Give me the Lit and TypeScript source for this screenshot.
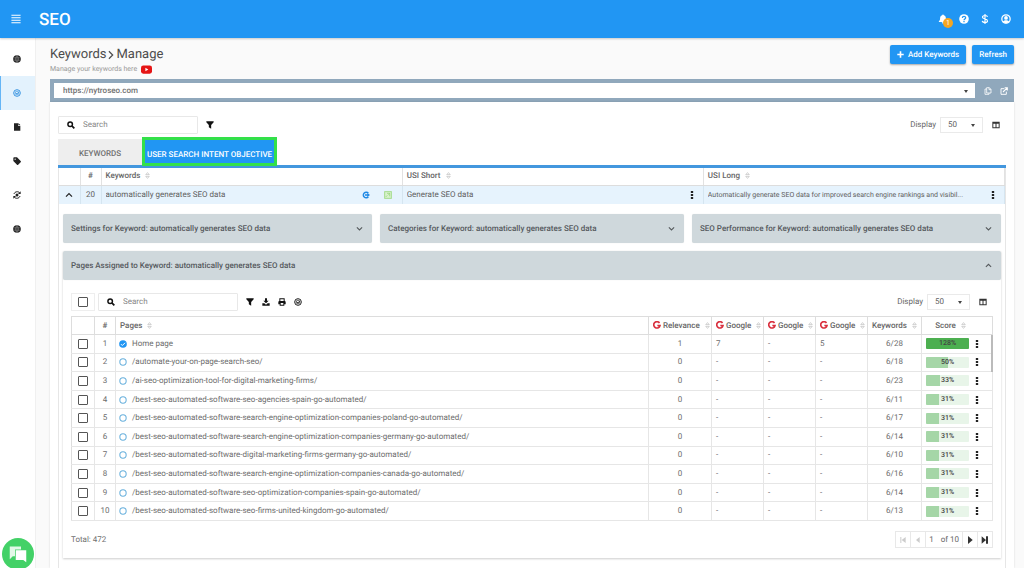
import { LitElement, html, css, svg, TemplateResult } from "lit";
import { customElement, property } from "lit/decorators.js";

const ICONS: Record<string, TemplateResult> = {
  menu: svg`<path d="M1 3h22M1 9h22M1 15h22M1 21h22" stroke="currentColor" stroke-width="2.800" fill="none"/>`,
  globe: svg`<circle cx="12" cy="12" r="11.500" fill="currentColor"/><path d="M2 8.500h20M2 15.500h20M12 1v22M12 2c-6 6-6 14 0 20M12 2c6 6 6 14 0 20" stroke="#fff" stroke-opacity=".55" stroke-width="1.300" fill="none"/>`,
  target: svg`<circle cx="12" cy="12" r="10" fill="none" stroke="currentColor" stroke-width="2.800"/><circle cx="12" cy="12" r="5.500" fill="none" stroke="currentColor" stroke-width="2"/><path d="M8.500 11.500l3.500 3.500 5-6" fill="none" stroke="currentColor" stroke-width="2.400"/>`,
  file: svg`<path d="M3 1h12v7h7v15H3zM16 0l6 6h-6z" fill="currentColor"/>`,
  tag: svg`<path fill-rule="evenodd" d="M1 3.500A2.500 2.500 0 0 1 3.500 1H12l11 11a2.500 2.500 0 0 1 0 3.500L15.500 23a2.500 2.500 0 0 1-3.500 0L1 12zM6.500 4.500a2 2 0 1 0 0 4 2 2 0 0 0 0-4z" fill="currentColor"/>`,
  sync: svg`<path d="M3 9C5 1 17 0 20 6M21 15c-2 8-14 9-17 3" stroke="currentColor" stroke-width="3" fill="none"/><path d="M23 1v8h-8zM1 23v-8h8z" fill="currentColor"/><circle cx="12" cy="12" r="4.500" fill="currentColor"/>`,
  bell: svg`<path d="M12 1a2 2 0 0 1 2 2c4 1 5 4 5 8 0 4 1 5 3 7v1H2v-1c2-2 3-3 3-7 0-4 1-7 5-8a2 2 0 0 1 2-2zM9 20h6a3 3 0 0 1-6 0z" fill="currentColor"/>`,
  help: svg`<circle cx="12" cy="12" r="11.500" fill="currentColor"/><path d="M8 9.500c0-5 8-5 8-.5 0 3-4 3-4 6M12 17v2.800" stroke="#2196f3" stroke-width="3" fill="none"/>`,
  dollar: svg`<path d="M18 7c-1-5-12-4-12 .5C6 13 18 10 18 16.500c0 5-12 5-12.500 0M12 0v24" stroke="currentColor" stroke-width="2.800" fill="none"/>`,
  user: svg`<circle cx="12" cy="12" r="10" fill="none" stroke="currentColor" stroke-width="3"/><circle cx="12" cy="9.500" r="4.500" fill="currentColor"/><path d="M4 19c2-5 14-5 16 0l-8 4z" fill="currentColor"/>`,
  play: svg`<rect x="0" y="3" width="24" height="18" rx="5" fill="#e51515"/><path d="M9.500 8l6.500 4-6.500 4z" fill="#fff"/>`,
  chevRight: svg`<path d="M7 3l9 9-9 9" stroke="currentColor" stroke-width="3" fill="none"/>`,
  chevDown: svg`<path d="M3 8l9 9 9-9" stroke="currentColor" stroke-width="3.600" fill="none"/>`,
  chevUp: svg`<path d="M3 17l9-9 9 9" stroke="currentColor" stroke-width="3.600" fill="none"/>`,
  plus: svg`<path d="M12 1v22M1 12h22" stroke="currentColor" stroke-width="5.500" fill="none"/>`,
  copy: svg`<path d="M8 2h8l5 5v11H8zM15 2v6h6M8 6H3v16h12v-4" stroke="currentColor" stroke-width="2.400" fill="none"/>`,
  external: svg`<path d="M13 5H3v17h16v-8" stroke="currentColor" stroke-width="2.800" fill="none"/><path d="M9 15L20 4M14 2.500h8v8" stroke="currentColor" stroke-width="3.200" fill="none"/>`,
  search: svg`<circle cx="9.500" cy="9.500" r="6.800" stroke="currentColor" stroke-width="4.400" fill="none"/><path d="M14.500 14.500l7.500 7.500" stroke="currentColor" stroke-width="5" fill="none"/>`,
  filter: svg`<path d="M1 1h22v3l-7.500 8v11l-7-4v-7L1 4z" fill="currentColor"/>`,
  columns: svg`<path fill-rule="evenodd" d="M1 2h22v20H1zM4 8v11h6.500V8zM13.500 8v11H20V8z" fill="currentColor"/>`,
  download: svg`<path d="M9 1h6v7h5l-8 8-8-8h5zM1 16h6l5 4 5-4h6v7H1z" fill="currentColor"/>`,
  print: svg`<path fill-rule="evenodd" d="M4 1h16v8h1l2 2v8h-4v4H5v-4H1v-8l2-2h1zM7 4v5h10V4zM8 15v5h8v-5z" fill="currentColor"/>`,
  sort: svg`<path d="M6 9l6-7 6 7zM6 15l6 7 6-7z" stroke="currentColor" stroke-width="1.800" fill="none"/>`,
  dots: svg`<path d="M8.500 0h7v6h-7zM8.500 9h7v6h-7zM8.500 18h7v6h-7z" fill="currentColor"/>`,
  google: svg`<path d="M19.500 6A9.500 9.500 0 1 0 21 13.500h-8" stroke="#d9303e" stroke-width="5" fill="none"/>`,
  visit: svg`<path d="M19 6.500a8.500 8.500 0 1 0 0 11" stroke="#1e88e5" stroke-width="4.500" fill="none"/><path d="M9 10h7V6l8 6-8 6v-4H9z" fill="#1e88e5"/>`,
  green: svg`<rect x="2" y="2" width="20" height="20" stroke="#a5dc8c" stroke-width="3" fill="#d9f2cd"/><path d="M5 18l5-5M9 7h8v9M13 11l4-4" stroke="#8ed070" stroke-width="2" fill="none"/>`,
  checked: svg`<circle cx="12" cy="12" r="11.500" fill="#2196f3"/><path d="M6 12.500l4 4 8-8" stroke="#fff" stroke-width="3" fill="none"/>`,
  ring: svg`<circle cx="12" cy="12" r="9.500" fill="#fff" stroke="#6ab1dd" stroke-width="3.200"/>`,
  first: svg`<path d="M4 3h3v18H4zM20 3v18L8 12z" fill="currentColor"/>`,
  prev: svg`<path d="M17 3v18L6 12z" fill="currentColor"/>`,
  next: svg`<path d="M6 0v24l14-12z" fill="currentColor"/>`,
  last: svg`<path d="M2 1v22l13-11zM15 1h6v22h-6z" fill="currentColor"/>`,
  chat: svg`<path d="M1 2h15v4H8v9H5l-4 4z" fill="#fff" fill-opacity=".85"/><path d="M9 7h14v16l-4-3H9z" fill="#fff"/>`,
};

@customElement("seo-icon")
export class SeoIcon extends LitElement {
  static styles = css`
    :host { display: inline-flex; flex: none; width: 8px; height: 8px; }
    svg { display: block; width: 100%; height: 100%; }
  `;
  @property() name = "menu";
  render() {
    return html`<svg viewBox="0 0 24 24" aria-hidden="true">${ICONS[this.name]}</svg>`;
  }
}

interface Page { path: string; relevance: number; ranks: string[]; keywords: string; score: number; }
const page = (path: string, keywords: string, score: number): Page =>
  ({ path, relevance: 0, ranks: ["-", "-", "-"], keywords, score });

const PAGES: Page[] = [
  { path: "Home page", relevance: 1, ranks: ["7", "-", "5"], keywords: "6/28", score: 128 },
  page("/automate-your-on-page-search-seo/", "6/18", 50),
  page("/ai-seo-optimization-tool-for-digital-marketing-firms/", "6/23", 33),
  page("/best-seo-automated-software-seo-agencies-spain-go-automated/", "6/11", 31),
  page("/best-seo-automated-software-search-engine-optimization-companies-poland-go-automated/", "6/17", 31),
  page("/best-seo-automated-software-search-engine-optimization-companies-germany-go-automated/", "6/14", 31),
  page("/best-seo-automated-software-digital-marketing-firms-germany-go-automated/", "6/10", 31),
  page("/best-seo-automated-software-search-engine-optimization-companies-canada-go-automated/", "6/16", 31),
  page("/best-seo-automated-software-seo-optimization-companies-spain-go-automated/", "6/14", 31),
  page("/best-seo-automated-software-seo-firms-united-kingdom-go-automated/", "6/13", 31),
];

const NAV = [
  ["globe", "Websites"], ["target", "Keywords"], ["file", "Pages"],
  ["tag", "Tags"], ["sync", "Automation"], ["globe", "Domains"],
];

@customElement("app-root")
export class AppRoot extends LitElement {
  static styles = css`
    :host {
      display: flex; flex-direction: column; height: 100vh; overflow: hidden;
      background: #fafafa; color: #606060; font: 8px/12px Roboto, "Liberation Sans", sans-serif;
      text-rendering: geometricPrecision;
    }
    * { box-sizing: border-box; }
    button, input, select { font: inherit; color: inherit; margin: 0; text-rendering: inherit; }
    button { border: 0; background: none; padding: 0; cursor: pointer; display: inline-flex; align-items: center; }
    a { color: inherit; text-decoration: none; }
    h1 { margin: 0; font: inherit; }

    .topbar { flex: none; height: 38px; display: flex; align-items: center; background: #2196f3; color: #fff; padding: 0 13px 0 11px; box-shadow: 0 1px 2px #0003; z-index: 1; }
    .brand { font-size: 17px; line-height: 20px; font-weight: 500; margin-left: 18px; padding-top: 2px; }
    .tools { margin-left: auto; display: flex; gap: 11px; align-items: center; }
    .tools seo-icon, .burger seo-icon { width: 10px; height: 10px; }
    .bell { position: relative; }
    .badge { position: absolute; left: 5px; top: 4px; width: 10px; height: 10px; border-radius: 50%; background: #f5a623; font-size: 7px; line-height: 10px; text-align: center; }

    .shell { flex: 1; min-height: 0; display: flex; }
    .side { flex: none; width: 36px; background: #fff; border-right: 1px solid #f0f0f0; padding-top: 4px; }
    .nav { height: 34px; display: flex; align-items: center; justify-content: center; color: #222; padding-right: 2px; }
    .nav.on { background: #e3f2fd; color: #2f8fe0; box-shadow: inset 1px 0 #64b5f6; }

    .main { flex: 1; min-width: 0; padding: 7px 10px 0 14px; display: flex; flex-direction: column; }
    .head { display: flex; justify-content: space-between; align-items: flex-start; height: 34px; }
    .title { display: flex; align-items: center; font-size: 13px; line-height: 20px; color: #4c4c4c; }
    .title seo-icon { width: 10px; height: 10px; }
    .sub { display: flex; align-items: center; gap: 4px; height: 8px; font-size: 7px; line-height: 8px; color: #999; }
    .sub seo-icon { width: 11px; height: 11px; }
    .actions { display: flex; gap: 6px; }
    .btn { height: 19px; padding: 0 7px; gap: 4px; background: #2196f3; color: #fff; font-weight: 500; border-radius: 2px; box-shadow: 0 1px 2px #0005; }
    .btn seo-icon { width: 7px; height: 7px; }

    .urlbar { flex: none; height: 23px; padding: 4px 6px 4px 4px; background: #90a8bc; display: flex; align-items: center; gap: 8px; color: #fff; }
    .pick { position: relative; display: flex; align-items: center; }
    .pick select { appearance: none; width: 100%; height: 100%; border: 0; background: #fff; color: #606060; outline: 0; border-radius: 0; }
    .pick::after { content: ""; position: absolute; right: 7px; top: 50%; margin-top: -1px; border: 2px solid transparent; border-top: 3px solid #444; border-bottom: 0; pointer-events: none; }
    .url { flex: 1; height: 15px; margin-right: 1px; }
    .url select { padding: 0 9px; font-weight: 500; color: #707070; }

    .card { flex: 1; background: #fff; padding: 14px 8px 0; box-shadow: 0 0 2px #0002; }
    .bar { display: flex; align-items: center; height: 18px; gap: 8px; color: #111; }
    .find { display: flex; align-items: center; width: 140px; height: 18px; border: 1px solid #e8e8e8; padding: 0 8px; gap: 8px; border-radius: 1px; }
    .find input { min-width: 0; flex: 1; border: 0; outline: 0; padding: 0; background: none; color: #555; }
    .find input::placeholder { color: #888; }
    .display { margin-left: auto; display: flex; align-items: center; gap: 4px; color: #666; }
    .display .pick { width: 43px; height: 16px; border: 1px solid #eaeaea; }
    .display select { padding: 0 7px; }
    .cols { width: 20px; justify-content: center; color: #333; margin-left: -5px; }

    .tabs { display: flex; align-items: flex-end; margin-top: 3px; height: 31px; border-bottom: 3px solid #4397de; }
    .tab { height: 26px; width: 84px; padding-top: 4px; justify-content: center; background: #eee; color: #707070; font-weight: 500; }
    .tab.on { width: auto; height: 29px; padding: 6px 2px 0; margin-bottom: -1px; border: 3px solid #33e04a; background: #2196f3; color: #fff; }

    table { width: 100%; border-collapse: collapse; table-layout: fixed; }
    th, td { padding: 0 4px; text-align: left; font-weight: 400; white-space: nowrap; overflow: hidden; }
    th { font-weight: 500; color: #666; }
    th seo-icon { color: #aaa; margin-left: 2px; width: 7px; height: 7px; vertical-align: -1px; }
    .c { text-align: center; }
    .outer { border: 1px solid #e6e6e6; border-top: 0; height: 100%; }
    .keys th { height: 17px; border-right: 1px solid #e2e2e2; border-bottom: 1px solid #ddd; }
    .keys td { height: 19px; background: #e6f3fd; border-right: 1px solid #d5e5f0; }
    .w21 { width: 21px; }
    .line { display: flex; align-items: center; gap: 14px; }
    .line .text { flex: 1; overflow: hidden; text-overflow: ellipsis; }
    .line .long { font-size: 7px; }
    .line .more { margin-left: -10px; }
    .line > seo-icon:last-child { margin-right: 6px; }
    .more { color: #222; vertical-align: middle; }
    .cell { margin-right: 3px; }

    .detail { padding: 10px 4px 0; display: flex; flex-direction: column; gap: 8px; }
    .trio { display: grid; grid-template-columns: 61fr 60fr 61fr; gap: 8px; }
    .acc { height: 29px; padding: 0 9px 0 8px; width: 100%; justify-content: space-between; background: #cfd8dc; color: #55595c; font-weight: 500; border-radius: 2px; box-shadow: 0 0 1px #0002; }
    .acc seo-icon { width: 7px; height: 7px; }
    .panel { background: #fff; box-shadow: 0 1px 2px #0003; padding-bottom: 10px; }
    .inner { padding: 13px 8px 0; }
    .all { width: 24px; height: 18px; border: 1px solid #eee; display: flex; align-items: center; justify-content: center; margin-right: -5px; }
    input[type="checkbox"] { appearance: none; display: block; width: 10px; height: 10px; margin: 0 auto; border: 1px solid #555; border-radius: 1px; background: #fff; }
    input[type="checkbox"]:checked { background: #2196f3; }
    .tight { display: flex; gap: 8px; }

    .grid { position: relative; margin-top: 5px; }
    .thumb { position: absolute; right: 0; top: 19px; width: 2px; height: 37px; background: #bbb; }
    .pages { height: 205px; border: 1px solid #ddd; border-bottom-color: #e6e6e6; }
    .pages th { height: 18px; border: 1px solid #ddd; border-width: 0 1px 1px 0; }
    .pages td { border: 1px solid #e6e6e6; border-width: 0 1px 1px 0; color: #6c6c6c; }
    .pages .nopad { padding: 0; }
    .pages .total { padding-right: 16px; }
    .name { display: flex; align-items: center; gap: 5px; margin-left: -1px; }
    .w23 { width: 23px; } .w52 { width: 52px; } .w54 { width: 54px; } .w63 { width: 63px; } .w71 { width: 71px; }
    th .logo { margin: 0 2px 0 0; width: 8px; height: 8px; }
    .score { display: flex; align-items: center; gap: 4px; }
    .meter { position: relative; width: 43px; height: 11px; background: #e8f5e9; text-align: center; line-height: 11px; font-size: 7px; font-weight: 500; color: #444; border-radius: 1px; overflow: hidden; }
    .fill { position: absolute; inset: 0 auto 0 0; background: #a5d6a7; max-width: 100%; }
    .fill.full { background: #4caf50; }
    .pct { position: relative; }

    .foot { display: flex; justify-content: space-between; align-items: center; margin-top: 10px; color: #707070; }
    .pager { display: flex; height: 17px; border: 1px solid #e8e8e8; }
    .pager > * { padding: 0 3px; border-right: 1px solid #e8e8e8; display: flex; align-items: center; color: #333; }
    .pager > :last-child { border: 0; }
    .pager button:disabled { color: #ccc; }
    .pager .at { gap: 7px; color: #666; }
    .pager seo-icon { width: 8px; height: 8px; }
    .chat { position: fixed; left: 2px; bottom: -2px; width: 32px; height: 32px; border-radius: 50%; background: #43d167; justify-content: center; }
    .chat seo-icon { width: 18px; height: 18px; }
  `;

  private icon(name: string, cls = "") {
    return html`<seo-icon class=${cls} name=${name}></seo-icon>`;
  }

  private display(id: string) {
    return html`
      <div class="display">
        <label for=${id}>Display</label>
        <span class="pick"><select id=${id}><option>50</option><option>100</option></select></span>
      </div>
      <button class="cols" aria-label="Choose columns">${this.icon("columns")}</button>`;
  }

  private accordion(label: string, open = false) {
    return html`<button class="acc" aria-expanded=${open ? "true" : "false"}>
      ${label}: automatically generates SEO data ${this.icon(open ? "chevUp" : "chevDown")}
    </button>`;
  }

  private row(p: Page, i: number) {
    return html`<tr>
      <td class="nopad"><input type="checkbox" aria-label="Select ${p.path}" /></td>
      <td class="nopad c">${i + 1}</td>
      <td><span class="name">${this.icon(i === 0 ? "checked" : "ring")}<span>${p.path}</span></span></td>
      <td class="c">${p.relevance}</td>
      ${p.ranks.map((r) => html`<td>${r}</td>`)}
      <td class="c">${p.keywords}</td>
      <td><span class="score">
        <span class="meter"><span class="fill ${p.score > 100 ? "full" : ""}" style="width:${p.score}%"></span><span class="pct">${p.score}%</span></span>
        <button class="more" aria-label="Row actions">${this.icon("dots")}</button>
      </span></td>
    </tr>`;
  }

  render() {
    const google = (label: string, cls: string) =>
      html`<th class=${cls}>${this.icon("google", "logo")}${label} ${this.icon("sort")}</th>`;
    return html`
      <header class="topbar">
        <button class="burger" aria-label="Menu">${this.icon("menu")}</button>
        <span class="brand">SEO</span>
        <div class="tools">
          <button class="bell" aria-label="Notifications">${this.icon("bell")}<span class="badge">1</span></button>
          <button aria-label="Help">${this.icon("help")}</button>
          <button aria-label="Billing">${this.icon("dollar")}</button>
          <button aria-label="Account">${this.icon("user")}</button>
        </div>
      </header>
      <div class="shell">
        <nav class="side">
          ${NAV.map(([icon, label], i) => html`<a class="nav ${i === 1 ? "on" : ""}" href="#" aria-label=${label}>${this.icon(icon)}</a>`)}
        </nav>
        <main class="main">
          <div class="head">
            <div>
              <h1 class="title">Keywords${this.icon("chevRight")}Manage</h1>
              <div class="sub">Manage your keywords here ${this.icon("play")}</div>
            </div>
            <div class="actions">
              <button class="btn">${this.icon("plus")}Add Keywords</button>
              <button class="btn">Refresh</button>
            </div>
          </div>
          <div class="urlbar">
            <span class="pick url"><select aria-label="Website"><option>https://nytroseo.com</option></select></span>
            <button aria-label="Copy">${this.icon("copy")}</button>
            <button aria-label="Open">${this.icon("external")}</button>
          </div>
          <section class="card">
            <div class="bar">
              <label class="find">${this.icon("search")}<input type="text" placeholder="Search" aria-label="Search keywords" /></label>
              <button aria-label="Filter">${this.icon("filter")}</button>
              ${this.display("display-keywords")}
            </div>
            <div class="tabs" role="tablist">
              <button class="tab" role="tab">KEYWORDS</button>
              <button class="tab on" role="tab" aria-selected="true">USER SEARCH INTENT OBJECTIVE</button>
            </div>
            <div class="outer">
              <table class="keys">
                <thead><tr>
                  <th class="w21"></th><th class="w21 c">#</th>
                  <th>Keywords ${this.icon("sort")}</th>
                  <th>USI Short ${this.icon("sort")}</th>
                  <th>USI Long ${this.icon("sort")}</th>
                </tr></thead>
                <tbody><tr>
                  <td class="c"><button class="more" aria-label="Collapse">${this.icon("chevUp")}</button></td>
                  <td class="c">20</td>
                  <td><span class="line"><span class="text">automatically generates SEO data</span>${this.icon("visit")}${this.icon("green")}</span></td>
                  <td><span class="line cell"><span class="text">Generate SEO data</span><button class="more" aria-label="Actions">${this.icon("dots")}</button></span></td>
                  <td><span class="line cell"><span class="text long">Automatically generate SEO data for improved search engine rankings and visibil...</span><button class="more" aria-label="Actions">${this.icon("dots")}</button></span></td>
                </tr></tbody>
              </table>
              <div class="detail">
                <div class="trio">
                  ${this.accordion("Settings for Keyword")}
                  ${this.accordion("Categories for Keyword")}
                  ${this.accordion("SEO Performance for Keyword")}
                </div>
                <div class="panel">
                  ${this.accordion("Pages Assigned to Keyword", true)}
                  <div class="inner">
                    <div class="bar">
                      <span class="all"><input type="checkbox" aria-label="Select all pages" /></span>
                      <label class="find">${this.icon("search")}<input type="text" placeholder="Search" aria-label="Search pages" /></label>
                      <span class="tight">
                        <button aria-label="Filter">${this.icon("filter")}</button>
                        <button aria-label="Download">${this.icon("download")}</button>
                        <button aria-label="Print">${this.icon("print")}</button>
                        <button aria-label="Optimize">${this.icon("target")}</button>
                      </span>
                      ${this.display("display-pages")}
                    </div>
                    <div class="grid">
                      <table class="pages">
                        <thead><tr>
                          <th class="w23"></th><th class="w21 c">#</th>
                          <th>Pages ${this.icon("sort")}</th>
                          ${google("Relevance", "w63")}${google("Google", "w52")}${google("Google", "w52")}${google("Google", "w52")}
                          <th class="w54">Keywords ${this.icon("sort")}</th>
                          <th class="c w71 total">Score ${this.icon("sort")}</th>
                        </tr></thead>
                        <tbody>${PAGES.map((p, i) => this.row(p, i))}</tbody>
                      </table>
                      <span class="thumb"></span>
                    </div>
                    <div class="foot">
                      <span>Total: 472</span>
                      <nav class="pager" aria-label="Pagination">
                        <button disabled aria-label="First page">${this.icon("first")}</button>
                        <button disabled aria-label="Previous page">${this.icon("prev")}</button>
                        <span class="at"><span>1</span><span>of 10</span></span>
                        <button aria-label="Next page">${this.icon("next")}</button>
                        <button aria-label="Last page">${this.icon("last")}</button>
                      </nav>
                    </div>
                  </div>
                </div>
              </div>
            </div>
          </section>
        </main>
      </div>
      <button class="chat" aria-label="Open chat">${this.icon("chat")}</button>
    `;
  }
}
